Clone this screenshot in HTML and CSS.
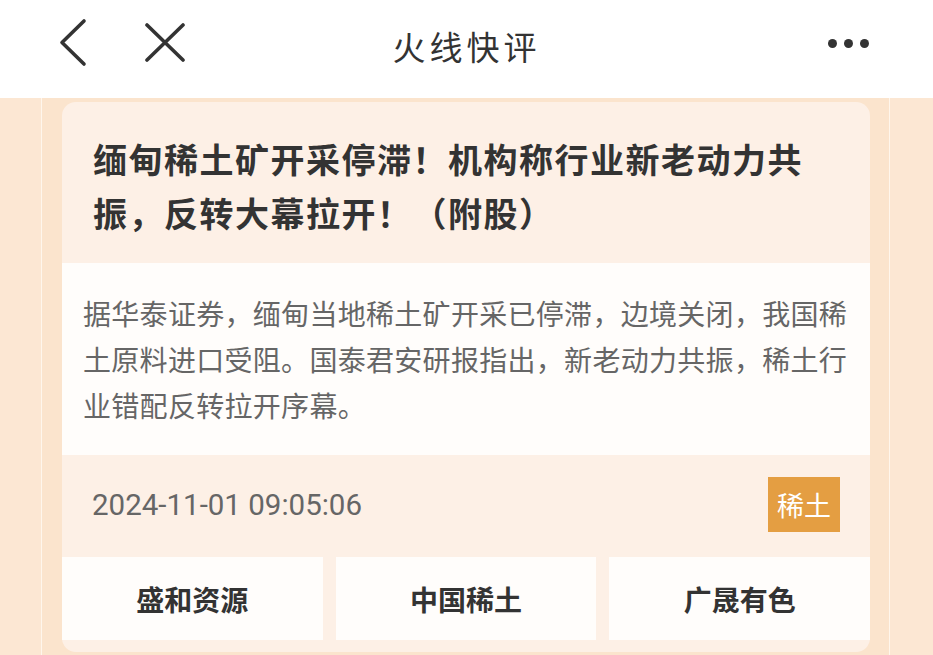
FILE: index.html
```html
<!DOCTYPE html>
<html lang="zh-CN">
<head>
  <meta charset="UTF-8">
  <title>火线快评</title>
  <meta name="viewport" content="width=device-width, initial-scale=1">
  <link rel="stylesheet" href="styles.css">
</head>
<body>

<div class="topbar">
  <div class="nav-left">
    <svg class="icon" width="30" height="50" viewBox="0 0 30 50">
      <polyline points="25,3 3,24.5 25,46" fill="none" stroke="#333" stroke-width="3.6" stroke-linecap="round" stroke-linejoin="round"/>
    </svg>
    <svg class="icon" width="40" height="40" viewBox="0 0 40 40">
      <path d="M2 2 L38 37 M38 2 L2 37" fill="none" stroke="#333" stroke-width="3.6" stroke-linecap="round"/>
    </svg>
  </div>
  <div class="title">火线快评</div>
  <div class="more">
    <span></span><span></span><span></span>
  </div>
</div>

<div class="page">
  <div class="frame">
    <div class="card">
      <div class="headline">
        <h1>缅甸稀土矿开采停滞！机构称行业新老动力共振，反转大幕拉开！（附股）</h1>
      </div>
      <div class="summary">
        <p>据华泰证券，缅甸当地稀土矿开采已停滞，边境关闭，我国稀土原料进口受阻。国泰君安研报指出，新老动力共振，稀土行业错配反转拉开序幕。</p>
      </div>
      <div class="meta">
        <span class="date">2024-11-01 09:05:06</span>
        <span class="tag">稀土</span>
      </div>
      <div class="stocks">
        <div class="stock">盛和资源</div>
        <div class="stock">中国稀土</div>
        <div class="stock">广晟有色</div>
      </div>
    </div>
  </div>
</div>

</body>
</html>
```

FILE: styles.css
```css
body {
  margin: 0;
  font-family: "Noto Sans CJK SC", "Noto Sans", sans-serif;
  background-color: #fce7d3;
  height: 655px;
  overflow: hidden;
}
.topbar {
  height: 98px;
  background: #fff;
  display: flex;
  align-items: center;
  justify-content: space-between;
  padding: 0 64px 0 59px;
  position: relative;
}
.nav-left {
  display: flex;
  align-items: center;
  gap: 56px;
  margin-top: -12px;
}
.nav-left .icon {
  display: block;
}
.title {
  position: absolute;
  left: 0;
  right: 0;
  top: 22px;
  text-align: center;
  font-size: 33px;
  letter-spacing: 4px;
  color: #333;
  pointer-events: none;
}
.more {
  display: flex;
  gap: 7px;
  margin-top: -12px;
}
.more span {
  width: 9px;
  height: 9px;
  border-radius: 50%;
  background: #333;
}
.page {
  padding: 0 43px 0 41px;
}
.frame {
  border-left: 1px solid #fff6ec;
  border-right: 1px solid #fff6ec;
  background: #fbe4cd;
  padding: 4px 19px 0 20px;
  height: 553px;
  overflow: hidden;
}
.card {
  background: #fdf0e6;
  border-radius: 14px;
  padding-bottom: 12px;
}
.headline {
  padding: 30px 56px 23px 31px;
}
.headline h1 {
  margin: 0;
  font-size: 34px;
  line-height: 54px;
  font-weight: bold;
  letter-spacing: 1.5px;
  color: #333;
}
.summary {
  background: #fffdfb;
  padding: 27px 18px 27px 21px;
}
.summary p {
  margin: 0;
  font-size: 28px;
  line-height: 46px;
  letter-spacing: 0.3px;
  color: #666;
}
.meta {
  display: flex;
  align-items: center;
  justify-content: space-between;
  padding: 22px 30px 23px 30px;
}
.date {
  font-family: Roboto, "Noto Sans", sans-serif;
  font-size: 29.5px;
  color: #666;
}
.tag {
  background: #e49e42;
  color: #fff;
  font-size: 27px;
  line-height: 55px;
  padding: 0 9px;
}
.stocks {
  display: grid;
  grid-template-columns: 1fr 1fr 1fr;
  gap: 13px;
  margin-top: 2px;
}
.stock {
  background: #fffdfb;
  height: 83px;
  display: flex;
  align-items: center;
  justify-content: center;
  font-size: 28px;
  font-weight: bold;
  color: #333;
}
```
